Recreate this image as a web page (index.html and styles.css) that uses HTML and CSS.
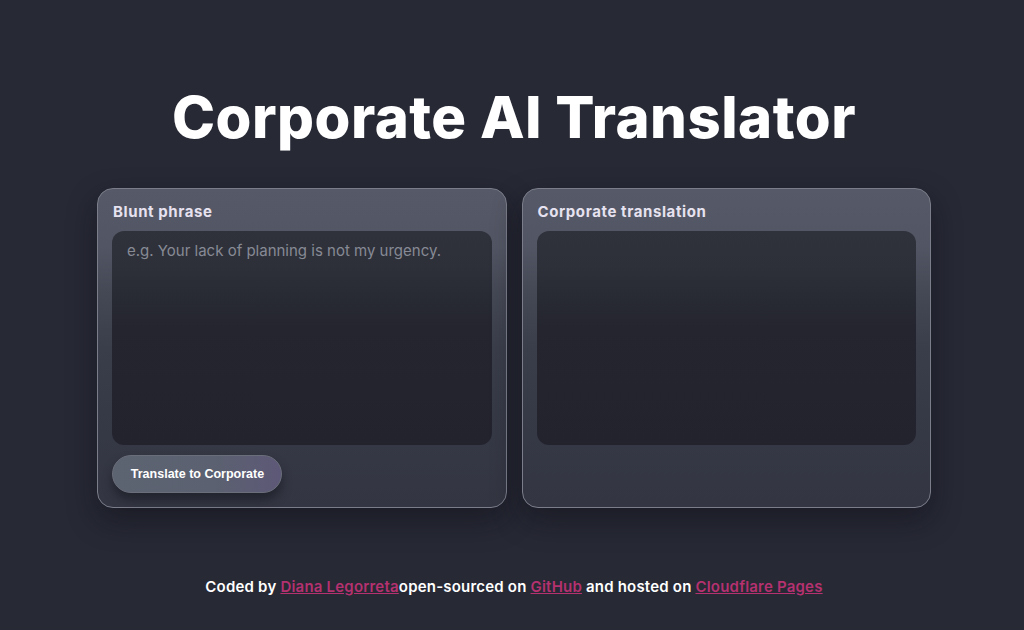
FILE: index.html
```html
<!DOCTYPE html>
<html lang="en">
<head>
<meta charset="utf-8">
<title>Corporate AI Translator</title>
<link rel="stylesheet" href="styles.css">
</head>
<body>
<main class="page">
  <h1 class="title">Corporate AI Translator</h1>
  <section class="panels">
    <div class="panel">
      <label class="panel-label" for="blunt">Blunt phrase</label>
      <textarea id="blunt" class="box" placeholder="e.g. Your lack of planning is not my urgency."></textarea>
      <button class="btn" type="button">Translate to Corporate</button>
    </div>
    <div class="panel">
      <div class="panel-label">Corporate translation</div>
      <div class="box"></div>
    </div>
  </section>
  <footer class="footer">Coded by <a href="#">Diana Legorreta</a>open-sourced on <a href="#">GitHub</a> and hosted on <a href="#">Cloudflare Pages</a></footer>
</main>
</body>
</html>
```
FILE: styles.css
```css
html, body {
  margin: 0;
  height: 100%;
}
body {
  background: #272935;
  color: #fff;
  font-family: Inter, "Open Sans", sans-serif;
}
.page {
  display: flex;
  flex-direction: column;
  align-items: center;
  padding-top: 80px;
  padding-left: 4px;
}
.title {
  margin: 0;
  font-size: 58px;
  line-height: 74px;
  font-weight: 800;
  letter-spacing: 0.5px;
}
.panels {
  margin-top: 34px;
  display: flex;
  gap: 15px;
  width: 834px;
}
.panel {
  flex: 1;
  display: flex;
  flex-direction: column;
  height: 320px;
  box-sizing: border-box;
  padding: 14px 14px 14px;
  border: 1px solid #7b7e8a;
  border-radius: 16px;
  background: linear-gradient(180deg, #565967 0%, #525563 18%, #454855 32%, #3a3d4a 50%, #363946 70%, #333642 100%);
  box-shadow: 0 12px 30px rgba(10, 11, 18, 0.45);
}
.panel-label {
  display: block;
  font-size: 15px;
  line-height: 18px;
  font-weight: 700;
  letter-spacing: 0.6px;
  color: #e6e2f0;
  margin-bottom: 10px;
  padding-left: 1px;
}
.box {
  display: block;
  box-sizing: border-box;
  width: 100%;
  height: 214px;
  border: none;
  border-radius: 12px;
  background: linear-gradient(180deg, #2f323b 0%, #2d3039 17%, #282a34 30%, #24252f 45%, #22232d 100%);
  padding: 10px 15px;
  font-family: inherit;
  font-size: 15px;
  color: #fff;
  resize: none;
  outline: none;
}
.box::placeholder {
  color: #878a95;
}
.btn {
  align-self: flex-start;
  margin-top: 10px;
  height: 38px;
  width: 170px;
  padding: 0 0 0 1px;
  border: 1px solid #6a6e7a;
  border-radius: 19px;
  background: linear-gradient(90deg, #5c6371 0%, #5b6170 60%, #5d5877 100%);
  color: #fff;
  font-family: "Liberation Sans", Arial, sans-serif;
  font-weight: 700;
  font-size: 12.5px;
  box-shadow: 0 7px 10px rgba(20, 21, 30, 0.55);
}
.footer {
  margin-top: 69px;
  font-size: 15px;
  font-weight: 600;
  letter-spacing: 0.2px;
  color: #fff;
}
.footer a {
  color: #b5316f;
  text-decoration: underline;
}
```
